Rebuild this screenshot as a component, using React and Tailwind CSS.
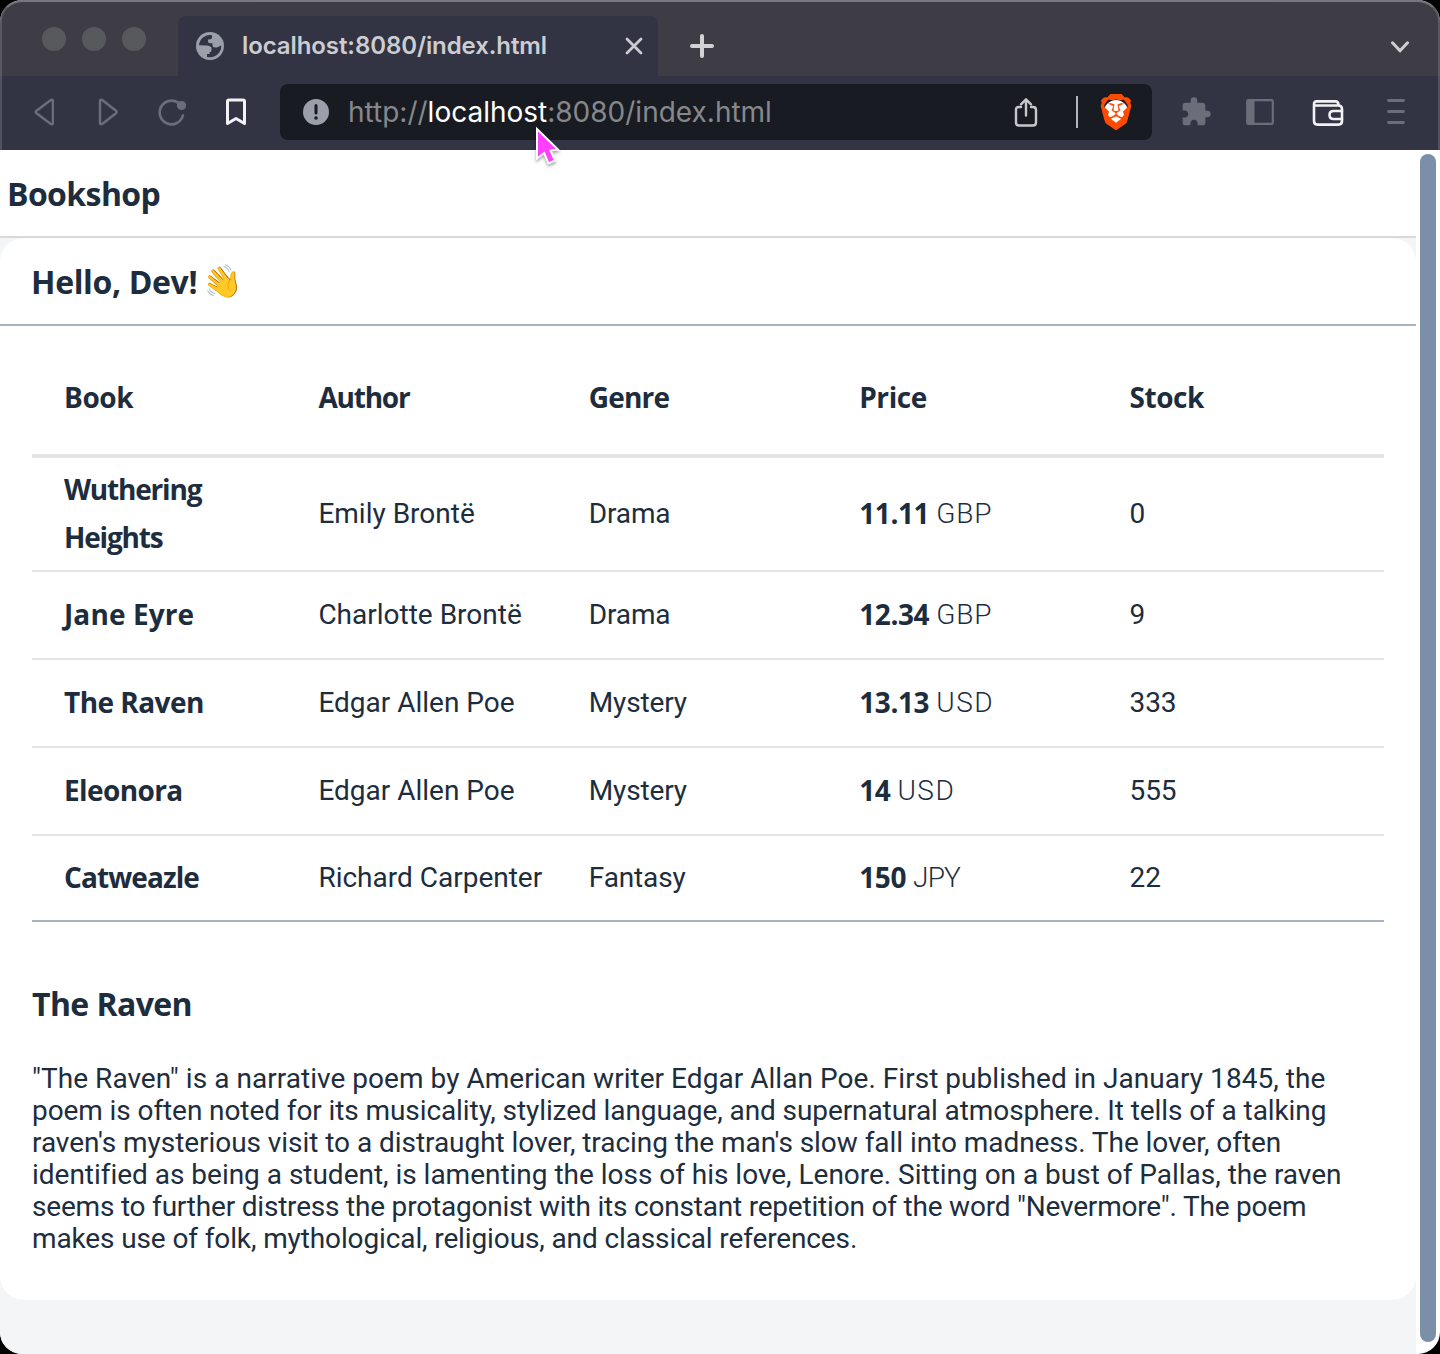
import React from 'react';
import { SiBrave } from 'react-icons/si';
import { MdExtension } from 'react-icons/md';

const books = [
  { title: 'Wuthering Heights', author: 'Emily Brontë', genre: 'Drama', price: '11.11', currency: 'GBP', stock: '0', h: 'h-[114px]', ls: 'tracking-[-1.2px]', cls: 'tracking-[0.9px]' },
  { title: 'Jane Eyre', author: 'Charlotte Brontë', genre: 'Drama', price: '12.34', currency: 'GBP', stock: '9', h: 'h-[88px]', ls: 'tracking-[0.1px]', cls: 'tracking-[0.9px]' },
  { title: 'The Raven', author: 'Edgar Allen Poe', genre: 'Mystery', price: '13.13', currency: 'USD', stock: '333', h: 'h-[88px]', ls: 'tracking-[-0.55px]', cls: 'tracking-[1.5px]' },
  { title: 'Eleonora', author: 'Edgar Allen Poe', genre: 'Mystery', price: '14', currency: 'USD', stock: '555', h: 'h-[88px]', ls: 'tracking-[-0.6px]', cls: 'tracking-[1.5px]' },
  { title: 'Catweazle', author: 'Richard Carpenter', genre: 'Fantasy', price: '150', currency: 'JPY', stock: '22', h: 'h-[86px]', ls: 'tracking-[-0.9px]', cls: 'tracking-[-0.8px]' },
];

const description = [
  { text: '"The Raven" is a narrative poem by American writer Edgar Allan Poe. First published in January 1845, the', ls: 'tracking-[0.04px]' },
  { text: 'poem is often noted for its musicality, stylized language, and supernatural atmosphere. It tells of a talking', ls: 'tracking-[-0.09px]' },
  { text: "raven's mysterious visit to a distraught lover, tracing the man's slow fall into madness. The lover, often", ls: 'tracking-[-0.05px]' },
  { text: 'identified as being a student, is lamenting the loss of his love, Lenore. Sitting on a bust of Pallas, the raven', ls: 'tracking-[-0.02px]' },
  { text: 'seems to further distress the protagonist with its constant repetition of the word "Nevermore". The poem', ls: 'tracking-[-0.2px]' },
  { text: 'makes use of folk, mythological, religious, and classical references.', ls: 'tracking-[-0.12px]' },
];

const columns = 'grid grid-cols-5';

function TabBar() {
  return (
    <div className="flex h-[76px] items-end bg-[#3e3d45]">
      <div className="mb-[25px] ml-[42px] flex gap-4">
        <span className="size-6 rounded-full bg-[#58595d]" />
        <span className="size-6 rounded-full bg-[#58595d]" />
        <span className="size-6 rounded-full bg-[#58595d]" />
      </div>
      <div className="ml-8 flex h-[60px] w-[480px] items-center rounded-t-lg bg-[#323443] pl-[18px] pr-[15px]">
        <svg className="size-7" viewBox="0 0 28 28">
          <circle cx="14" cy="14" r="14" fill="#9b9fa9" />
          <path
            d="M3 13.200A11.200 11.200 0 0 1 16 3.200V5Q16 7.500 13 7.500H12V9.500Q12 11.300 14 11.300H16.500V13.500Q16.500 15.500 19 15.500H21L25.200 13.500A11.200 11.200 0 0 1 11 24.900V22H13.500V20.500Q15.500 20 15.500 18V15.500Q13.500 13.500 11 13.500Z"
            fill="#323443"
          />
        </svg>
        <span className="ml-[18px] flex-1 whitespace-nowrap font-['Inter',sans-serif] text-2xl font-semibold tracking-[-0.09px] text-[#cccdd1]">
          localhost:8080/index.html
        </span>
        <svg className="size-[18px]" viewBox="0 0 18 18" fill="none" stroke="#cccdd1" strokeWidth="2.8" strokeLinecap="round">
          <path d="M2 2l14 14M16 2L2 16" />
        </svg>
      </div>
      <svg className="mb-[18px] ml-8 size-6" viewBox="0 0 24 24" fill="none" stroke="#d2d2d5" strokeWidth="4" strokeLinecap="round">
        <path d="M12 2v20M2 12h20" />
      </svg>
      <svg className="mb-[23px] ml-auto mr-[31px] h-3 w-[18px]" viewBox="0 0 18 12" fill="none" stroke="#cfcfd2" strokeWidth="3" strokeLinecap="round" strokeLinejoin="round">
        <path d="M1.500 1.800L9 9.800l7.500-8" />
      </svg>
    </div>
  );
}

function AddressBar() {
  return (
    <div className="flex h-[56px] w-[872px] items-center rounded-lg bg-[#181b22] pl-[23px]">
      <svg className="size-[26px]" viewBox="0 0 26 26">
        <circle cx="13" cy="13" r="13" fill="#9b9fa9" />
        <path d="M13 6.500v7.500" stroke="#181b22" strokeWidth="3" strokeLinecap="round" />
        <circle cx="13" cy="19" r="1.800" fill="#181b22" />
      </svg>
      <span className="ml-[19px] whitespace-nowrap font-['Inter',sans-serif] text-[28px] leading-9 text-[#87888c]">
        http://<span className="text-white">localhost</span>:8080/index.html
      </span>
      <svg className="ml-auto h-[30px] w-6" viewBox="0 0 24 30" fill="none" stroke="#c6c7c9" strokeWidth="2.400" strokeLinecap="round" strokeLinejoin="round">
        <path d="M12 18.500V3M7 7.300L12 2.300l5 5" />
        <path d="M7 10H5Q2 10 2 13V25.500Q2 28.500 5 28.500H19Q22 28.500 22 25.500V13Q22 10 19 10H17" />
      </svg>
      <span className="ml-[38px] h-8 w-0.5 bg-[#b4b5b8]" />
      <span className="relative ml-[20px] mr-[18px] grid size-[36px] place-items-center">
        <span className="absolute h-[24px] w-[24px] rounded-full bg-white" />
        <SiBrave className="relative size-9 text-[#ff4b00]" />
      </span>
    </div>
  );
}

function Toolbar() {
  return (
    <div className="flex h-[74px] items-center bg-[#323443] pb-0.5">
      <svg className="ml-[34px] h-7 w-5" viewBox="0 0 20 28" fill="none" stroke="#6b6d78" strokeWidth="2.500" strokeLinejoin="round">
        <path d="M2.500 12.800L16.500 2.300Q19 .8 19 3.500V24.500Q19 27.200 16.500 25.700L2.500 15.200Q1.100 14 2.500 12.800Z" />
      </svg>
      <svg className="ml-[44px] h-7 w-5" viewBox="0 0 20 28" fill="none" stroke="#6b6d78" strokeWidth="2.500" strokeLinejoin="round">
        <path d="M18 12.800L4.500 2.300Q2 .8 2 3.500V24.500Q2 27.200 4.500 25.700L18 15.200Q19.400 14 18 12.800Z" />
      </svg>
      <svg className="ml-10 size-7" viewBox="0 0 28 28">
        <path d="M24.600 17A11.800 11.800 0 1 1 19.500 4" transform="translate(0.300 0.500)" fill="none" stroke="#6b6d78" strokeWidth="2.700" strokeLinecap="round" />
        <circle cx="23.500" cy="7.500" r="4.600" fill="#6b6d78" />
      </svg>
      <svg className="ml-[39px] h-7 w-[22px]" viewBox="0 0 22 28" fill="none" stroke="#f2f2f4" strokeWidth="3" strokeLinejoin="round">
        <path d="M2.500 3.500Q2.500 2 4 2H18Q19.500 2 19.500 3.500V25.500L11 20.500L2.500 25.500Z" />
      </svg>
      <div className="ml-[33px]">
        <AddressBar />
      </div>
      <MdExtension className="ml-[28px] size-[32px] text-[#6b6d78]" />
      <svg className="ml-[34px] h-[26px] w-7" viewBox="0 0 28 26">
        <rect x="1.200" y="1.200" width="25.600" height="23.600" rx="1.500" fill="none" stroke="#6b6d78" strokeWidth="2.200" />
        <path d="M1 1H8.500V25H1Z" fill="#6b6d78" />
      </svg>
      <svg className="ml-[38px] mt-0.5 h-[26px] w-8" viewBox="0 0 32 26" fill="none" stroke="#f2f2f4" strokeWidth="2.600" strokeLinejoin="round" strokeLinecap="round">
        <path d="M2 5.500V21Q2 24.600 5.500 24.600H26.500Q30 24.600 30 21V9Q30 5.500 26.500 5.500H3Q2 5.500 2 4.500V4Q2 1.400 4.500 1.400H23.500Q26 1.400 26.500 4.500" />
        <path d="M30 11H21.500Q17.500 11 17.500 15T21.500 19H30" />
      </svg>
      <svg className="ml-[43px] h-[26px] w-[18px]" viewBox="0 0 18 26" fill="none" stroke="#6b6d78" strokeWidth="2.800" strokeLinecap="round">
        <path d="M1.500 1.500h15M1.500 12.500h15M1.500 23.500h15" />
      </svg>
    </div>
  );
}

function BookTable() {
  return (
    <div className="mx-8 border-b-2 border-[#a8b3bd] text-[28px] text-[#1d2d3e]">
      <div className={`${columns} h-[132px] items-center border-b-4 border-[#e5e5e5] pt-[14px] font-['Open_Sans',sans-serif] font-bold tracking-[-0.8px]`}>
        <div className="pl-8 tracking-[-0.4px]">Book</div>
        <div className="pl-4 tracking-[-1.2px]">Author</div>
        <div className="pl-4">Genre</div>
        <div className="pl-4 tracking-[-0.4px]">Price</div>
        <div className="pl-4 tracking-[-0.5px]">Stock</div>
      </div>
      {books.map((b, i) => (
        <div
          key={b.title}
          className={`${columns} ${b.h} items-center whitespace-nowrap leading-[48px] ${i < books.length - 1 ? 'border-b-2 border-[#e5e5e5]' : '-mb-0.5 pb-0.5'}`}
        >
          <div className={`whitespace-normal pb-0.5 pl-8 font-['Open_Sans',sans-serif] font-bold ${b.ls}`}>{b.title}</div>
          <div className="pl-4">{b.author}</div>
          <div className="pl-4 tracking-[-0.15px]">{b.genre}</div>
          <div className="flex items-center pl-4">
            <span className="pb-0.5 font-['Open_Sans',sans-serif] font-bold tracking-[-0.4px]">{b.price}</span>
            <span className={`ml-[7px] font-light ${b.cls}`}>{b.currency}</span>
          </div>
          <div className="pl-4 tracking-[-0.2px]">{b.stock}</div>
        </div>
      ))}
    </div>
  );
}

export default function App() {
  return (
    <div className="bg-black font-['Roboto',sans-serif]">
      <div className="relative flex h-[1354px] flex-col overflow-hidden rounded-[22px] bg-white">
        <TabBar />
        <Toolbar />
        <div className="pointer-events-none absolute inset-x-0 top-0 h-[150px] overflow-hidden">
          <div className="h-[200px] rounded-t-[22px] border-2 border-white/15 border-t-white/30" />
        </div>
        <div className="flex flex-1">
          <main className="flex w-[1416px] flex-col bg-[#f4f5f7] text-[#1d2d3e]">
            <header className="flex h-[88px] items-center border-b-2 border-[#d9d9d9] bg-white pl-[7px] pt-0.5">
              <h1 className="font-['Open_Sans',sans-serif] text-[32px] font-bold tracking-[-0.6px]">Bookshop</h1>
            </header>
            <section className="h-[1062px] rounded-3xl bg-white">
              <div className="flex h-[88px] items-center border-b-2 border-[#a8b3bd] pl-[31px] pt-0.5">
                <h2 className="font-['Open_Sans',sans-serif] text-[32px] font-bold tracking-[-0.35px]">Hello, Dev!</h2>
                <span className="ml-[5px] inline-block -rotate-12 text-[32px]">👋</span>
              </div>
              <BookTable />
              <h2 className="mt-[58px] px-8 font-['Open_Sans',sans-serif] text-[32px] font-bold leading-[48px] tracking-[-0.6px]">The Raven</h2>
              <div className="mt-[35px] px-8 text-[28px] leading-8">
                {description.map((l) => (
                  <p key={l.text} className={`whitespace-nowrap ${l.ls}`}>{l.text}</p>
                ))}
              </div>
            </section>
          </main>
          <div className="flex flex-1 justify-center px-1 pb-3 pt-1">
            <div className="w-4 rounded-full bg-[#7b8fa9]" />
          </div>
        </div>
        <svg className="absolute left-[532px] top-[124px] h-[44px] w-[32px] drop-shadow-[0_2px_1.5px_rgba(0,0,0,0.35)]" viewBox="0 0 32 44">
          <path d="M5 5L26 25.500L18.500 26.500L23 36.500L16.500 39.500L12.200 29L5 34.500Z" fill="#ff40ff" stroke="white" strokeWidth="2" />
        </svg>
      </div>
    </div>
  );
}
